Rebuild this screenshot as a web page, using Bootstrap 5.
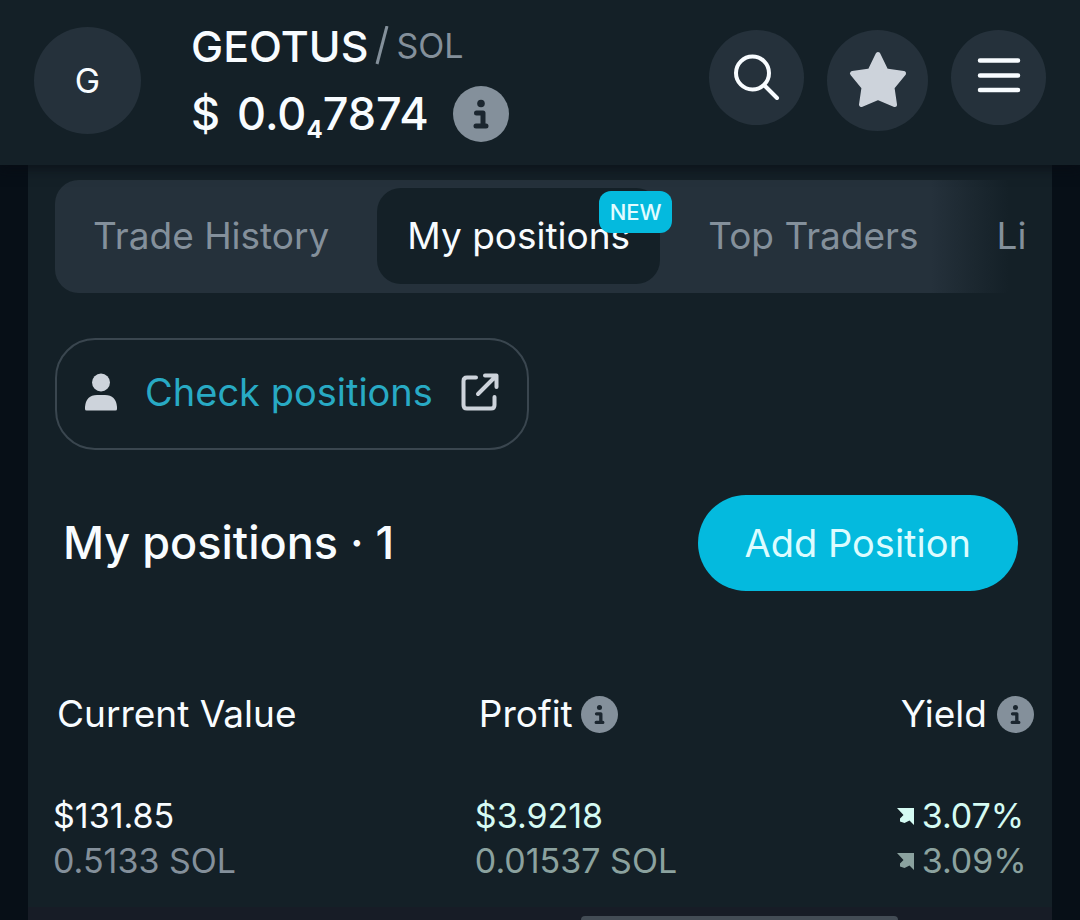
<!DOCTYPE html>
<html lang="en">
<head>
<meta charset="utf-8">
<meta name="viewport" content="width=device-width, initial-scale=1">
<title>GEOTUS / SOL</title>
<link rel="stylesheet" href="https://cdn.jsdelivr.net/npm/bootstrap@5.3.0/dist/css/bootstrap.min.css">
<style>
:root { --surface:#142027; --raised:#25313b; --ink:#f8fcff; --muted:#84909b; --cyan:#04bade; --soft:#cdd3db; }
body { font-family:Inter,"Open Sans",sans-serif; font-size:38px; line-height:44px; color:var(--ink); background:#070f17; overflow-x:hidden; }
svg { display:block; flex:none; }
.topbar { background:var(--surface); height:165px; padding:27px 34px 0; box-shadow:0 2px 12px 2px rgba(8,10,18,.65); position:relative; z-index:1; }
.avatar { width:107px; height:107px; background:var(--raised); font-size:34px; margin-right:50px; }
.price, .section-title { font-size:45px; font-weight:500; }
.pair { font-size:43px; font-weight:500; line-height:38px; gap:7px; margin-top:-1px; }
.quote { font-size:34px; font-weight:400; color:var(--muted); }
.slash { stroke:var(--muted); stroke-width:3; }
.price { line-height:56px; margin-top:20px; }
.currency { margin-right:17px; }
.price .icon-btn { margin-left:24px; }
.price small { font-size:24px; line-height:24px; font-weight:700; position:relative; top:8px; }
.round-btn { width:95px; height:95px; background:var(--raised); border:0; padding:0; }
.round-btn.star { width:101px; height:101px; }
.icon-btn { border:0; padding:0; background:none; }
.actions { gap:23px; padding-top:3px; }
.panel { background:var(--surface); margin:0 28px; padding-top:15px; }
.tabbar { margin:0 24px 0 27px; padding:8px; height:113px; gap:18px; border-radius:24px; background:linear-gradient(90deg,var(--raised) 90%,var(--surface) 98%); overflow:hidden; }
.tabbar .tab { flex:none; height:96px; padding:0 30px; border:0; border-radius:24px; background:none; color:var(--muted); font-size:37px; position:relative; white-space:nowrap; }
.tabbar .tab.active { background:var(--surface); color:var(--ink); }
.tag { position:absolute; top:3px; right:-12px; width:73px; height:42px; border-radius:12px; background:var(--cyan); color:#e2fcff; font-size:22px; line-height:42px; font-weight:500; text-align:center; }
.check { margin:45px 0 0 27px; height:112px; padding:0 28px 4px; border:2px solid #3a464f; border-radius:40px; color:#28aac4; }
.section-row { margin:45px 34px 0 35px; height:96px; }
.add-btn { height:96px; padding:0 47px; border:0; border-radius:48px; background:var(--cyan); color:#dcfcff; }
.positions { margin:92px 18px 0 25px; }
.positions table { width:100%; table-layout:fixed; }
.positions th { font-size:37px; font-weight:400; padding:9px 0 57px 4px; height:110px; }
.positions td { font-size:34px; line-height:45px; padding:0; white-space:nowrap; }
.positions th:not(:last-child) { width:43%; }
.sub { color:var(--muted); }
.gain { color:#d5fbf3; }
.gain .sub { color:#8ba29f; }
.scroll-track { background:#171c26; height:13px; }
.scroll-thumb { height:4px; width:31%; margin-right:15%; border-radius:4px 4px 0 0; background:#434c55; }
</style>
</head>
<body class="min-vh-100 d-flex flex-column">
<svg width="0" height="0" class="position-absolute" aria-hidden="true">
  <symbol id="info" viewBox="0 0 56 56"><circle cx="28" cy="28" r="28" fill="#84909b"/><circle cx="28" cy="17.5" r="3.8" fill="#1b262f"/><path d="M23.500 27h6.500v12.500M23 40h10" fill="none" stroke="#1b262f" stroke-width="5" stroke-linecap="round" stroke-linejoin="round"/></symbol>
  <symbol id="up" viewBox="0 0 17 18"><path d="M0 1H17V18L12.500 13.500 7.500 16 3 14.500V11.500L6.500 8z" fill="currentColor"/></symbol>
</svg>

<header class="topbar d-flex align-items-start">
  <div class="avatar rounded-circle d-flex align-items-center justify-content-center">G</div>
  <div class="me-auto">
    <div class="pair d-flex align-items-center">GEOTUS
      <svg class="slash" width="14" height="40" viewBox="0 0 14 40"><path d="M12 0 2 38"/></svg>
      <span class="quote">SOL</span></div>
    <div class="price d-flex align-items-center"><span class="currency">$</span><span>0.0<small>4</small>7874</span>
      <button class="icon-btn" aria-label="Price information"><svg width="56" height="56"><use href="#info"/></svg></button></div>
  </div>
  <nav class="actions d-flex align-items-start" aria-label="Actions">
    <button class="round-btn rounded-circle" aria-label="Search"><svg width="95" height="95" viewBox="0 0 95 95" fill="none" stroke="#f8fcff" stroke-width="4" stroke-linecap="round"><circle cx="43.500" cy="43" r="16.500"/><path d="M55.500 55.500 68 68"/></svg></button>
    <button class="round-btn star rounded-circle" aria-label="Favourite"><svg width="101" height="101" viewBox="0 0 101 101"><path d="M51 24.500 59 41 76.500 43.500 65 57.500 67.500 74.500 51 67.500 34.500 74.500 37 57.500 25.500 43.500 43 41z" fill="#cdd3db" stroke="#cdd3db" stroke-width="5" stroke-linejoin="round"/></svg></button>
    <button class="round-btn rounded-circle" aria-label="Menu"><svg width="95" height="95" viewBox="0 0 95 95" stroke="#f8fcff" stroke-width="4.500" stroke-linecap="round"><path d="M29 30.500H67M29 45.500H67M29 60H67"/></svg></button>
  </nav>
</header>

<main class="panel flex-grow-1 d-flex flex-column align-items-stretch">
  <div class="tabbar d-flex" role="tablist">
    <button class="tab" role="tab">Trade History</button>
    <button class="tab active" role="tab" aria-selected="true">My positions<span class="tag">NEW</span></button>
    <button class="tab" role="tab">Top Traders</button>
    <button class="tab" role="tab">Li</button>
  </div>

  <a href="#" class="check d-inline-flex align-items-center align-self-start text-decoration-none">
    <svg width="32" height="38" viewBox="0 0 32 38" fill="#cdd3db"><circle cx="16" cy="9.500" r="9"/><path d="M0 36V34Q1 22 12 22h8q11 0 12 12v2q0 1.500-1.500 1.500h-29Q0 37.500 0 36z"/></svg>
    <span class="px-4 mx-1">Check positions</span>
    <svg width="38" height="38" viewBox="0 0 38 38" fill="none" stroke="#cdd3db" stroke-width="4" stroke-linecap="round" stroke-linejoin="round"><path d="M15 4.500H6Q2.500 4.500 2.500 8V32Q2.500 35.500 6 35.500H30Q33.500 35.500 33.500 32V24M24 2.500H35.500V14M34.500 3.500 17 21"/></svg>
  </a>

  <div class="section-row d-flex align-items-center justify-content-between">
    <h1 class="section-title mb-0">My positions · 1</h1>
    <button class="add-btn">Add Position</button>
  </div>

  <div class="positions">
    <table>
      <thead><tr>
        <th scope="col">Current Value</th>
        <th scope="col"><span class="d-flex align-items-center">Profit<button class="icon-btn ms-2" aria-label="About profit"><svg width="37" height="37"><use href="#info"/></svg></button></span></th>
        <th scope="col"><span class="d-flex align-items-center justify-content-between">Yield<button class="icon-btn" aria-label="About yield"><svg width="37" height="37"><use href="#info"/></svg></button></span></th>
      </tr></thead>
      <tbody><tr>
        <td><div>$131.85</div><div class="sub">0.5133 SOL</div></td>
        <td class="gain"><div>$3.9218</div><div class="sub">0.01537 SOL</div></td>
        <td class="gain"><div class="d-flex align-items-center gap-2"><svg width="17" height="18"><use href="#up"/></svg>3.07%</div><div class="sub d-flex align-items-center gap-2"><svg width="17" height="18"><use href="#up"/></svg>3.09%</div></td>
      </tr></tbody>
    </table>
  </div>
  <div class="scroll-track mt-auto d-flex align-items-end justify-content-end"><div class="scroll-thumb"></div></div>
</main>
<script src="https://cdn.jsdelivr.net/npm/bootstrap@5.3.0/dist/js/bootstrap.bundle.min.js"></script>
</body>
</html>
